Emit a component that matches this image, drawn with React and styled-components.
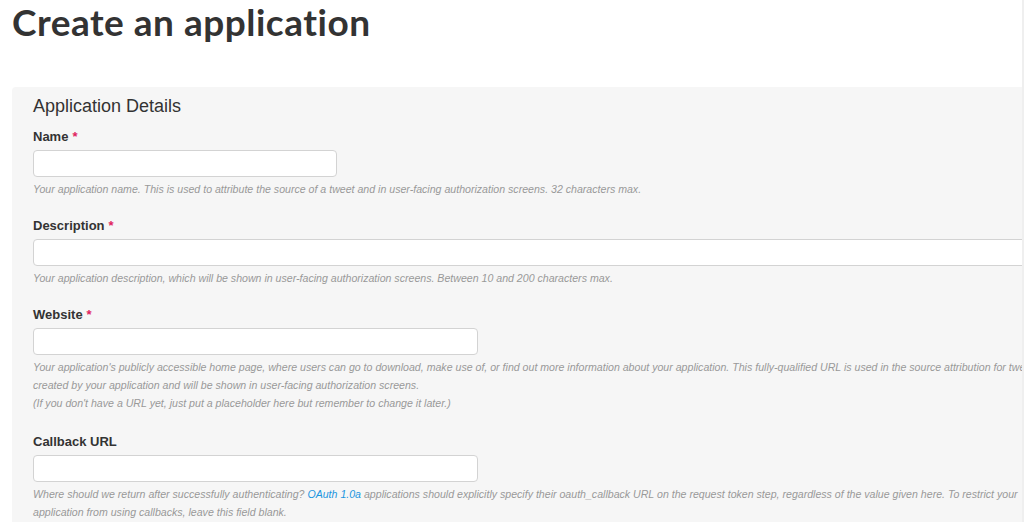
import React from 'react'
import styled, { createGlobalStyle } from 'styled-components'

const GlobalStyle = createGlobalStyle`
  body {
    margin: 0;
    background: #fff;
    font-family: "Liberation Sans", Arial, sans-serif;
  }
`

const fields = [
  {
    label: 'Name',
    required: true,
    width: '304px',
    hint: ['Your application name. This is used to attribute the source of a tweet and in user-facing authorization screens. 32 characters max.'],
  },
  {
    label: 'Description',
    required: true,
    width: '100%',
    hint: ['Your application description, which will be shown in user-facing authorization screens. Between 10 and 200 characters max.'],
  },
  {
    label: 'Website',
    required: true,
    width: '445px',
    hint: [
      "Your application's publicly accessible home page, where users can go to download, make use of, or find out more information about your application. This fully-qualified URL is used in the source attribution for tweets created by your application and will be shown in user-facing authorization screens.",
      "(If you don't have a URL yet, just put a placeholder here but remember to change it later.)",
    ],
  },
  {
    label: 'Callback URL',
    required: false,
    width: '445px',
    hint: null,
  },
]

function App() {
  return (
    <Page>
      <GlobalStyle />
      <Title>Create an application</Title>
      <Viewport>
        <Panel>
          <Heading>Application Details</Heading>
          {fields.map((f) => (
            <Field key={f.label}>
              <Label>
                {f.label}
                {f.required && <Star>*</Star>}
              </Label>
              <Input $width={f.width} type="text" />
              <Hint>
                {f.hint ? (
                  f.hint.map((line, i) => <div key={i}>{line}</div>)
                ) : (
                  <>
                    Where should we return after successfully authenticating? <Link href="#">OAuth 1.0a</Link> applications
                    should explicitly specify their oauth_callback URL on the request token step, regardless of the value
                    given here. To restrict your application from using callbacks, leave this field blank.
                  </>
                )}
              </Hint>
            </Field>
          ))}
        </Panel>
      </Viewport>
    </Page>
  )
}

export default App

const Page = styled.div`
width: 1022px;
height: 522px;
overflow: hidden;
border-right: 2px solid #efefef;
`

const Title = styled.h1`
margin: 0;
padding: 0 0 0 12px;
height: 82px;
font-family: Lato, "Open Sans", sans-serif;
font-weight: 700;
font-size: 37px;
letter-spacing: 0.5px;
line-height: 44px;
color: #333;
`

const Viewport = styled.div`
margin-top: 1px;
padding: 4px 0 0 12px;
height: 500px;
overflow: hidden;
border-right: 2px solid #c4c4c4;
margin-right: -2px;
`

const Panel = styled.div`
box-sizing: border-box;
width: 1041px;
min-height: 480px;
background: #f6f6f6;
border-radius: 4px 0 0 0;
padding: 8px 0 0 21px;
`

const Heading = styled.h2`
margin: 0 0 11px;
font-size: 18px;
font-weight: 400;
line-height: 22px;
color: #333;
`

const Field = styled.div`
margin-bottom: 19px;

&:last-child {
  margin-top: 21px;
}
`

const Label = styled.label`
display: block;
font-size: 13px;
font-weight: 700;
line-height: 18px;
color: #333;
margin-bottom: 4px;
`

const Star = styled.span`
color: #e0245e;
margin-left: 4px;
`

const Input = styled.input`
display: block;
box-sizing: border-box;
width: ${(p) => p.$width};
height: 27px;
margin: 0 0 3px;
border: 1px solid #d3d3d3;
border-radius: 4px;
background: #fff;
`

const Hint = styled.div`
font-size: 10.6px;
font-style: italic;
line-height: 18px;
color: #999;
`

const Link = styled.a`
color: #1b95e0;
text-decoration: none;
`
